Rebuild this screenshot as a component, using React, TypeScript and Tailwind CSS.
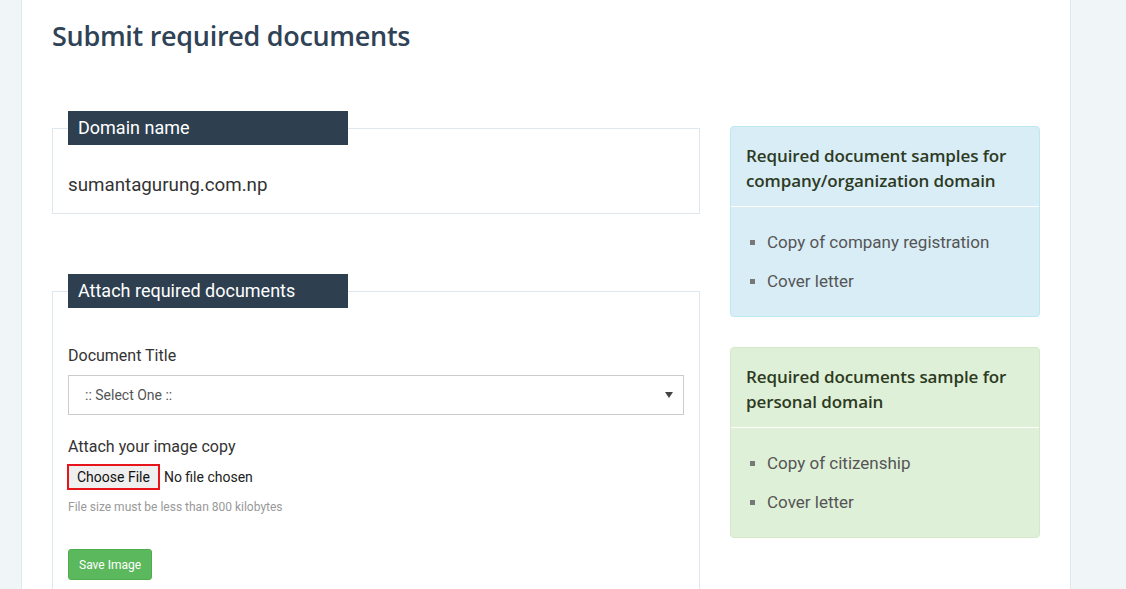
const companyDocs = ['Copy of company registration', 'Cover letter'];
const personalDocs = ['Copy of citizenship', 'Cover letter'];

function Legend({ children }: { children: React.ReactNode }) {
  return (
    <legend className="ml-0 h-[34px] w-[280px] bg-[#2e4050] px-[10px] text-[18px] leading-[34px] text-white">
      {children}
    </legend>
  );
}

function SampleBox({
  title,
  items,
  tone,
}: {
  title: React.ReactNode;
  items: string[];
  tone: 'info' | 'success';
}) {
  const box =
    tone === 'info'
      ? 'border-[#bce8f1] bg-[#d9edf7]'
      : 'border-[#d6e9c6] bg-[#dff0d8]';
  return (
    <div className={`rounded-[4px] border ${box}`}>
      <h4
        className="whitespace-nowrap border-b border-white px-[15px] pb-[13px] pt-[16px] text-[17px] font-semibold leading-[25px] text-[#2d3a1f]"
        style={{ fontFamily: '"Open Sans", sans-serif', letterSpacing: '-0.1px' }}
      >
        {title}
      </h4>
      <ul className="px-[15px] pb-[15px] pt-[16px]">
        {items.map((item) => (
          <li key={item} className="flex h-[39px] items-center text-[17px] text-[#555]">
            <span className="ml-[4px] mr-[12px] inline-block h-[5px] w-[5px] bg-[#777]" />
            {item}
          </li>
        ))}
      </ul>
    </div>
  );
}

export default function App() {
  return (
    <div
      className="flex min-h-[589px] bg-[#f0f5f8] text-[#333]"
      style={{ fontFamily: 'Roboto, "Liberation Sans", sans-serif' }}
    >
      <div className="w-[21px] shrink-0" />
      <main className="h-[589px] w-[1050px] shrink-0 overflow-hidden border-x border-[#e1e9ee] bg-white px-[30px]">
        <h1
          className="pt-[17px] text-[27px] font-semibold leading-[37px] text-[#2f4256]"
          style={{ fontFamily: '"Open Sans", sans-serif', letterSpacing: '-0.3px' }}
        >
          Submit required documents
        </h1>

        <div className="mt-[57px] flex gap-[30px]">
          <div className="w-[648px] shrink-0">
            <fieldset className="border border-[#dfe8ee] px-[15px] pb-[15px]">
              <Legend>Domain name</Legend>
              <p className="mt-[27px] text-[18.75px] leading-[26px]">sumantagurung.com.np</p>
            </fieldset>

            <fieldset className="mt-[60px] border border-[#dfe8ee] px-[15px] pb-[40px]">
              <Legend>Attach required documents</Legend>
              <label className="mt-[37px] block text-[16px] leading-[22px]">Document Title</label>
              <div className="mt-[8px] flex h-[40px] items-center justify-between border border-[#ccc] pl-[16px] pr-[10px] text-[14px] text-[#555]">
                <span>:: Select One ::</span>
                <svg width="8" height="6" viewBox="0 0 8 6">
                  <path d="M0 0h8L4 6z" fill="#444" />
                </svg>
              </div>

              <label className="mt-[21px] block text-[16px] leading-[22px]">Attach your image copy</label>
              <div className="mt-[6px] flex items-center text-[14px]">
                <span className="-ml-px flex h-[26px] items-center border-2 border-[#e8141c] bg-[#efefef] px-[8px] text-[#111]">
                  Choose File
                </span>
                <span className="ml-[4px] text-[#222]">No file chosen</span>
              </div>
              <p className="mt-[9px] text-[12px] leading-[16px] text-[#999]">File size must be less than 800 kilobytes</p>

              <button className="mt-[34px] h-[31px] rounded-[3px] border border-[#4cae4c] bg-[#5cb85c] px-[10px] text-[12px] text-white">
                Save Image
              </button>
            </fieldset>
          </div>

          <aside className="mt-[15px] flex w-[310px] shrink-0 flex-col gap-[30px]">
            <SampleBox
              tone="info"
              title={
                <>
                  Required document samples for
                  <br />
                  company/organization domain
                </>
              }
              items={companyDocs}
            />
            <SampleBox
              tone="success"
              title={
                <>
                  Required documents sample for
                  <br />
                  personal domain
                </>
              }
              items={personalDocs}
            />
          </aside>
        </div>
      </main>
    </div>
  );
}
